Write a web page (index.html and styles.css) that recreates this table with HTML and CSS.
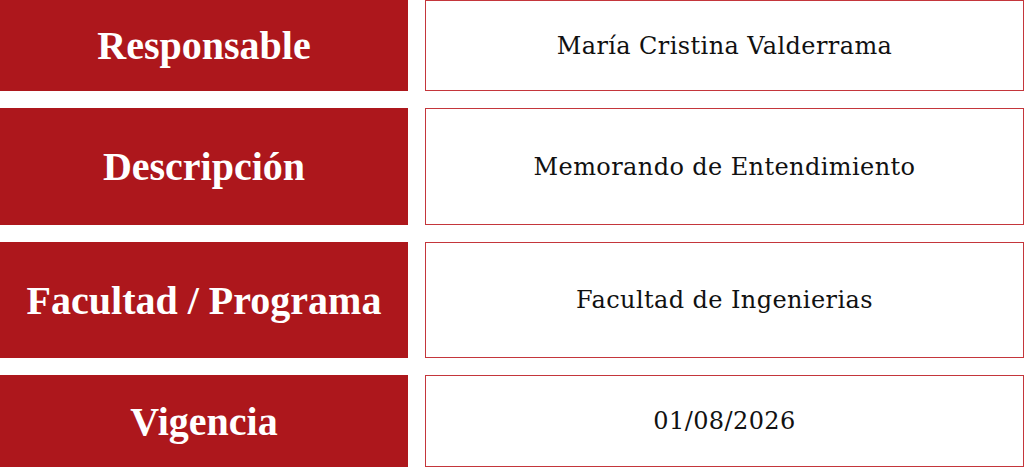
FILE: index.html
```html
<!DOCTYPE html>
<html lang="es">
<head>
<meta charset="utf-8">
<title>Ficha</title>
<link rel="stylesheet" href="styles.css">
</head>
<body>
<div class="table">
  <div class="row r1">
    <div class="label">Responsable</div>
    <div class="value">María Cristina Valderrama</div>
  </div>
  <div class="row r2">
    <div class="label">Descripción</div>
    <div class="value">Memorando de Entendimiento</div>
  </div>
  <div class="row r3">
    <div class="label">Facultad / Programa</div>
    <div class="value">Facultad de Ingenierias</div>
  </div>
  <div class="row r4">
    <div class="label">Vigencia</div>
    <div class="value">01/08/2026</div>
  </div>
</div>
</body>
</html>
```

FILE: styles.css
```css
html, body {
  margin: 0;
  padding: 0;
  background: #ffffff;
}
.table {
  display: flex;
  flex-direction: column;
  gap: 17px;
  width: 1024px;
}
.row {
  display: grid;
  grid-template-columns: 408px 599px;
  column-gap: 17px;
}
.r1 { height: 91px; }
.r2 { height: 117px; }
.r3 { height: 116px; }
.r4 { height: 92px; }
.label {
  background: #ad171c;
  color: #ffffff;
  display: flex;
  align-items: center;
  justify-content: center;
  font-family: "Liberation Serif", serif;
  font-weight: bold;
  font-size: 40px;
}
.value {
  box-sizing: border-box;
  border: 1px solid #c4363b;
  display: flex;
  align-items: center;
  justify-content: center;
  font-family: "DejaVu Serif", serif;
  font-size: 24px;
  letter-spacing: 0.4px;
  color: #111111;
}
```
